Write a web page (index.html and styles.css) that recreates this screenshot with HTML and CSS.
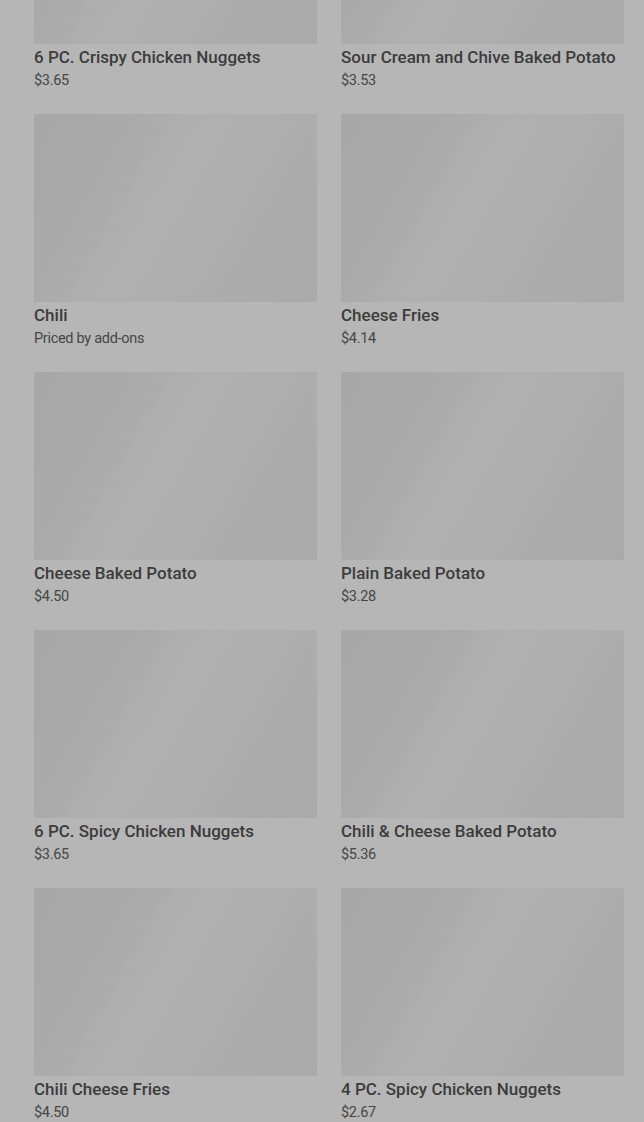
FILE: index.html
```html
<!DOCTYPE html>
<html>
<head>
    <title>Menu</title>
    <link rel="stylesheet" href="styles.css">
</head>
<body>
    <div class="menu-grid">
        <div class="item">
            <div class="thumb"></div>
            <div class="name">6 PC. Crispy Chicken Nuggets</div>
            <div class="price">$3.65</div>
        </div>
        <div class="item">
            <div class="thumb"></div>
            <div class="name">Sour Cream and Chive Baked Potato</div>
            <div class="price">$3.53</div>
        </div>
        <div class="item">
            <div class="thumb"></div>
            <div class="name">Chili</div>
            <div class="price">Priced by add-ons</div>
        </div>
        <div class="item">
            <div class="thumb"></div>
            <div class="name">Cheese Fries</div>
            <div class="price">$4.14</div>
        </div>
        <div class="item">
            <div class="thumb"></div>
            <div class="name">Cheese Baked Potato</div>
            <div class="price">$4.50</div>
        </div>
        <div class="item">
            <div class="thumb"></div>
            <div class="name">Plain Baked Potato</div>
            <div class="price">$3.28</div>
        </div>
        <div class="item">
            <div class="thumb"></div>
            <div class="name">6 PC. Spicy Chicken Nuggets</div>
            <div class="price">$3.65</div>
        </div>
        <div class="item">
            <div class="thumb"></div>
            <div class="name">Chili &amp; Cheese Baked Potato</div>
            <div class="price">$5.36</div>
        </div>
        <div class="item">
            <div class="thumb"></div>
            <div class="name">Chili Cheese Fries</div>
            <div class="price">$4.50</div>
        </div>
        <div class="item">
            <div class="thumb"></div>
            <div class="name">4 PC. Spicy Chicken Nuggets</div>
            <div class="price">$2.67</div>
        </div>
    </div>
</body>
</html>
```

FILE: styles.css
```css
html, body {
    background-color: #b6b6b6;
}
body {
    margin: 0;
    font-family: Roboto, "Noto Sans", sans-serif;
    overflow: hidden;
}
.menu-grid {
    display: grid;
    grid-template-columns: 283px 283px;
    column-gap: 24px;
    row-gap: 23px;
    padding: 0 20px 0 34px;
    margin-top: -144px;
}
.thumb {
    height: 188px;
    background: linear-gradient(120deg, #a8a8a8 0%, #a9a9a9 22%, #b0b0b0 45%, #adadad 70%, #aaaaaa 100%);
}
.name {
    margin-top: 1px;
    font-size: 17px;
    line-height: 24px;
    font-weight: 500;
    color: #3c3c3c;
    white-space: nowrap;
}
.price {
    margin-top: 2px;
    font-size: 14.5px;
    line-height: 20px;
    letter-spacing: -0.3px;
    color: #464646;
}
```
